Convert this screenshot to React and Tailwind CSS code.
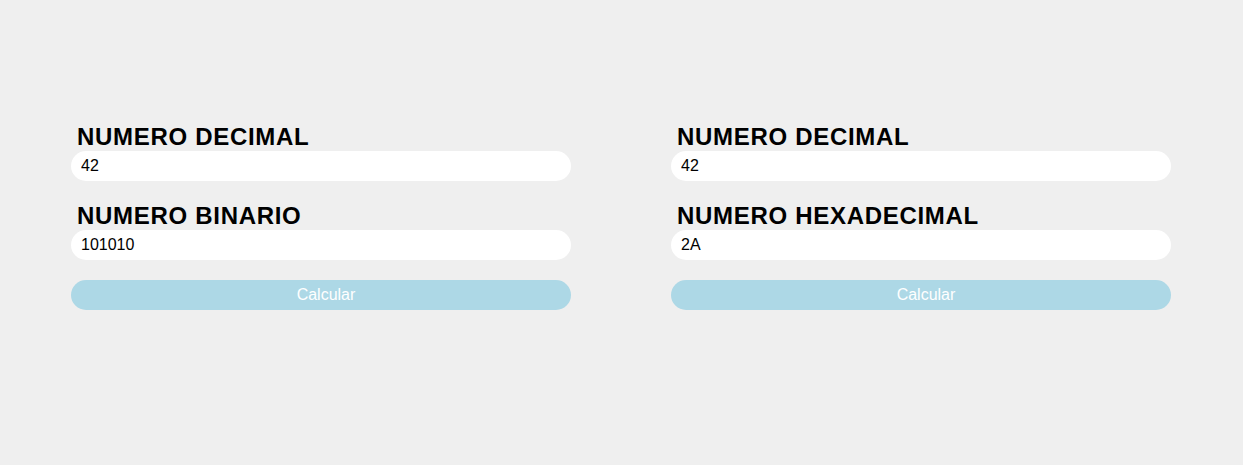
import React, { useState } from 'react';

const Converter = ({ label, initialDecimal, initialResult }) => {
  const [decimal, setDecimal] = useState(initialDecimal);
  const [result, setResult] = useState(initialResult);

  return (
    <div className="w-[500px] flex flex-col">
      <h2 className="pl-[6px] text-[24px] leading-[29px] tracking-[0.7px] font-bold text-black">NUMERO DECIMAL</h2>
      <input value={decimal} onChange={(e) => setDecimal(e.target.value)}
        className="h-[30px] mb-[20px] px-[10px] rounded-[15px] bg-white text-[16px] text-black outline-none" />
      <h2 className="pl-[6px] text-[24px] leading-[29px] tracking-[0.7px] font-bold text-black">{label}</h2>
      <input value={result} onChange={(e) => setResult(e.target.value)}
        className="h-[30px] mb-[20px] px-[10px] rounded-[15px] bg-white text-[16px] text-black outline-none" />
      <button className="h-[30px] pl-[10px] rounded-[15px] bg-[#add8e6] text-white text-[16px]">Calcular</button>
    </div>
  );
};

const App = () => {
  return (
    <div className="min-h-[465px] bg-[#efefef] flex justify-center gap-[100px] pt-[122px] pr-[1px]"
      style={{ fontFamily: '"Liberation Sans", Arial, sans-serif' }}>
      <Converter label="NUMERO BINARIO" initialDecimal="42" initialResult="101010" />
      <Converter label="NUMERO HEXADECIMAL" initialDecimal="42" initialResult="2A" />
    </div>
  );
};

export default App;
